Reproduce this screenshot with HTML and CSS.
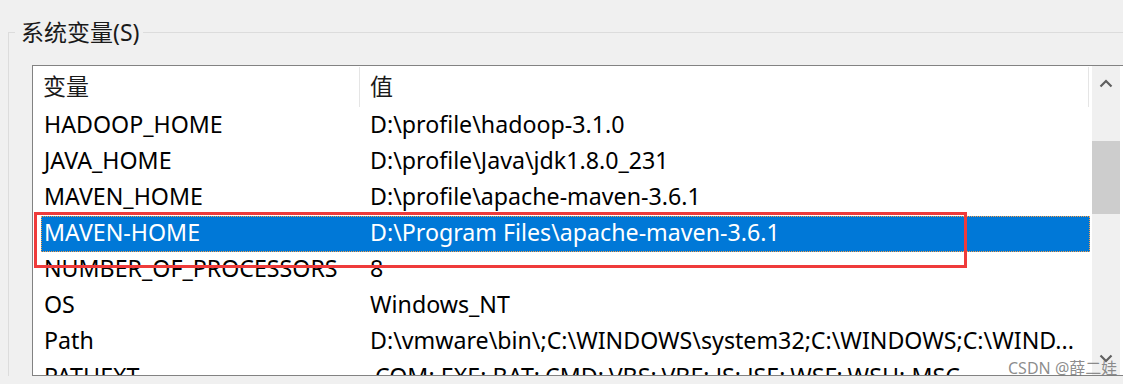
FILE: index.html
```html
<!DOCTYPE html>
<html lang="zh-CN">
<head>
  <meta charset="UTF-8" />
  <title>系统变量</title>
  <link rel="stylesheet" href="styles.css">
</head>
<body>

  <fieldset class="grupo">
    <legend>系统变量(S)</legend>

    <div class="lista-box">
      <div class="lista">
        <!-- cabeçalho das colunas -->
        <div class="lista-head">
          <div class="col-nome">变量</div>
          <div class="col-valor">值</div>
        </div>

        <div class="lista-body">
          <div class="linha"><span class="nome">HADOOP_HOME</span><span class="valor">D:\profile\hadoop-3.1.0</span></div>
          <div class="linha"><span class="nome">JAVA_HOME</span><span class="valor">D:\profile\Java\jdk1.8.0_231</span></div>
          <div class="linha"><span class="nome">MAVEN_HOME</span><span class="valor">D:\profile\apache-maven-3.6.1</span></div>
          <div class="linha selecionada"><span class="nome">MAVEN-HOME</span><span class="valor">D:\Program Files\apache-maven-3.6.1</span></div>
          <div class="linha"><span class="nome">NUMBER_OF_PROCESSORS</span><span class="valor">8</span></div>
          <div class="linha"><span class="nome">OS</span><span class="valor">Windows_NT</span></div>
          <div class="linha"><span class="nome">Path</span><span class="valor">D:\vmware\bin\;C:\WINDOWS\system32;C:\WINDOWS;C:\WIND...</span></div>
          <div class="linha"><span class="nome">PATHEXT</span><span class="valor">.COM;.EXE;.BAT;.CMD;.VBS;.VBE;.JS;.JSE;.WSF;.WSH;.MSC</span></div>
        </div>
      </div>

      <!-- barra de rolagem -->
      <div class="scrollbar">
        <div class="sb-btn">
          <svg width="14" height="9" viewBox="0 0 14 9"><path d="M1.5 7.5 L7 2 L12.5 7.5" fill="none" stroke="#606060" stroke-width="2.2"/></svg>
        </div>
        <div class="sb-track"><div class="sb-thumb"></div></div>
        <div class="sb-btn">
          <svg width="14" height="9" viewBox="0 0 14 9"><path d="M1.5 1.5 L7 7 L12.5 1.5" fill="none" stroke="#606060" stroke-width="2.2"/></svg>
        </div>
      </div>
    </div>
  </fieldset>

  <!-- marcação vermelha por cima da linha selecionada -->
  <div class="marca"></div>

  <div class="watermark">CSDN @薛二娃</div>

</body>
</html>
```

FILE: styles.css
```css
body {
  margin: 0;
  background-color: #f0f0f0;
  color: #000;
  font-family: "Noto Sans", "Noto Sans CJK SC", sans-serif;
  width: 1123px;
  height: 384px;
  overflow: hidden;
  position: relative;
}

.grupo {
  margin: 19px 0 0 8px;
  padding: 20px 0 0 23px;
  border: 1px solid #dcdcdc;
  border-right: none;
  border-bottom: none;
  min-width: 0;
}

.grupo legend {
  margin-left: -17px;
  padding: 0 4px 0 6px;
  font-size: 23px;
  line-height: 26px;
  color: #1a1a1a;
}

.lista-box {
  display: flex;
  height: 311px;
  box-sizing: border-box;
  border: 1px solid #828282;
  border-right: none;
  background-color: #fff;
  overflow: hidden;
  padding-right: 3px;
}

.lista {
  flex: 1;
  overflow: hidden;
}

.lista-head {
  display: flex;
  height: 42px;
  font-size: 23px;
  color: #1a1a1a;
}

.lista-head div {
  height: 40px;
  margin-top: 1px;
  line-height: 38px;
  padding-left: 10px;
  box-sizing: border-box;
  border-right: 1px solid #e5e5e5;
}

.col-nome {
  width: 327px;
}

.col-valor {
  width: 729px;
}

.linha {
  display: flex;
  height: 36px;
  line-height: 33px;
  margin-left: 8px;
  width: 1049px;
  box-sizing: border-box;
  padding-left: 3px;
  font-size: 23.2px;
  white-space: nowrap;
}

.linha .nome {
  width: 326px;
  flex-shrink: 0;
}

.selecionada {
  background-color: #0078d7;
  color: #fff;
  outline: 1px dotted #f7a04a;
  outline-offset: -1px;
}

.scrollbar {
  width: 28px;
  display: flex;
  flex-direction: column;
  background-color: #f0f0f0;
}

.sb-btn {
  height: 34px;
  display: flex;
  align-items: center;
  justify-content: center;
}

.sb-track {
  flex: 1;
  padding-top: 41px;
}

.sb-thumb {
  height: 73px;
  background-color: #cdcdcd;
}

.marca {
  position: absolute;
  left: 34px;
  top: 212px;
  width: 933px;
  height: 56px;
  box-sizing: border-box;
  border: 3px solid #ef3b3b;
}

.watermark {
  position: absolute;
  left: 1008px;
  top: 355px;
  font-size: 16px;
  color: rgba(120, 120, 120, 0.85);
}
```
